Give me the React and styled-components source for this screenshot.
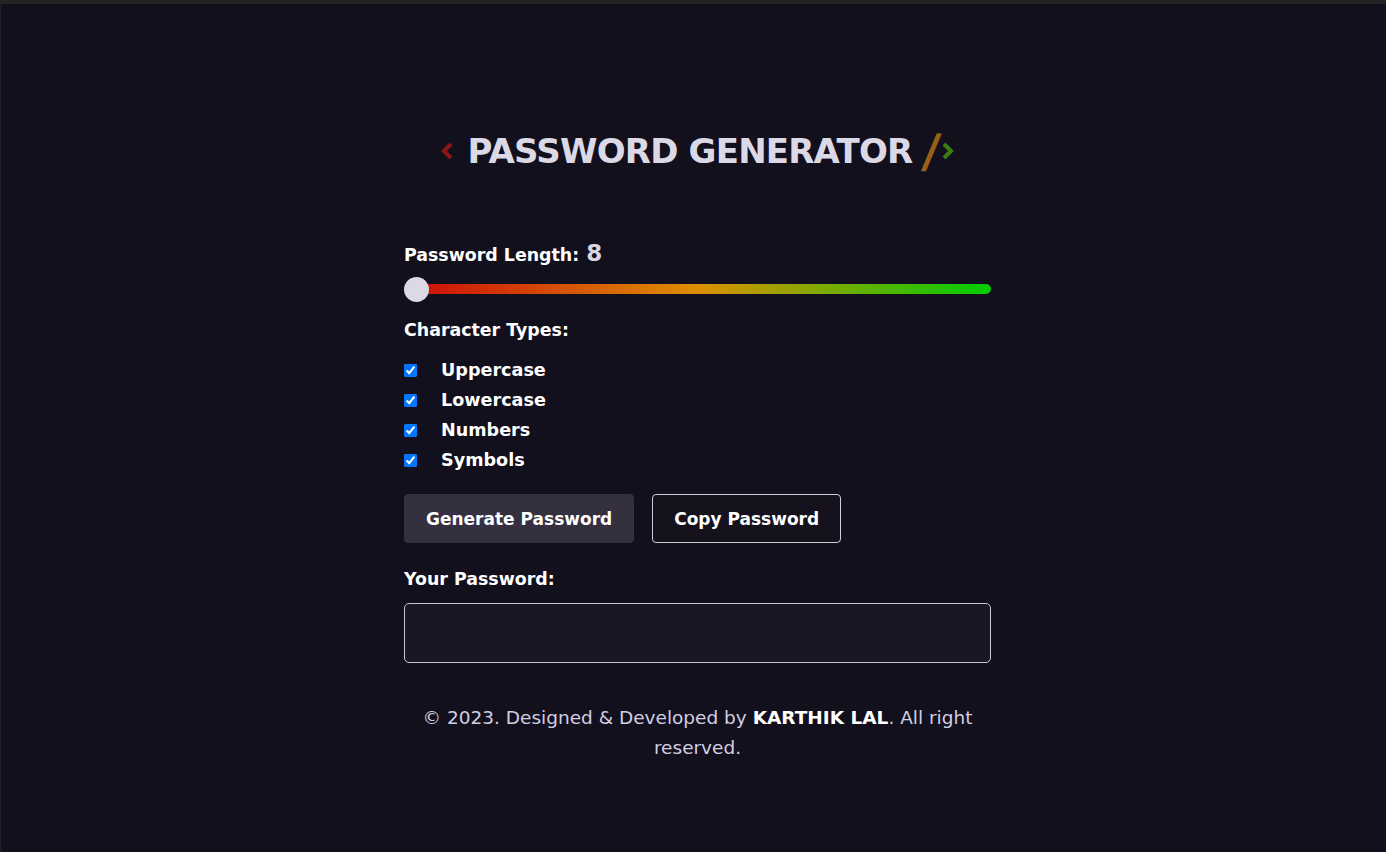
import React, { useState } from 'react';
import styled, { createGlobalStyle } from 'styled-components';

const GlobalStyle = createGlobalStyle`
  html, body {
    margin: 0;
    padding: 0;
    background: #13101d;
  }
  body {
    font-family: "DejaVu Sans", "Noto Sans", sans-serif;
    color: #ffffff;
  }
`;

const TopBar = styled.div`
  height: 4px;
  background: #232323;
`;

const Page = styled.main`
  min-height: 848px;
  border-left: 1px solid #1f1d26;
  box-sizing: border-box;
  display: flex;
  flex-direction: column;
  align-items: center;
  padding: 122px 0 0 8px;
`;

const Title = styled.h1`
  margin: 0;
  display: flex;
  align-items: center;
  font-size: 34px;
  font-weight: 700;
  letter-spacing: -0.8px;
  color: #dcd9e6;
  line-height: 50px;
`;

const Chevron = styled.svg`
  width: 14px;
  height: 18px;
  margin: ${(p) => (p.right ? '0 0 0 2px' : '0 14px 0 0')};
  flex-shrink: 0;
`;

const Slash = styled.span`
  margin-left: 11px;
  color: #9a6016;
  font-size: 46px;
  font-weight: 700;
  line-height: 50px;
  display: inline-block;
  transform: skewX(-6deg);
`;

const Card = styled.section`
  width: 587px;
  margin-top: 65px;
  display: flex;
  flex-direction: column;
`;

const Label = styled.div`
  font-size: 17.4px;
  font-weight: 700;
  color: #ffffff;
  line-height: 24px;
  display: flex;
  align-items: baseline;
  gap: 7px;
`;

const LengthValue = styled.span`
  font-size: 23px;
  font-weight: 700;
  color: #d8d4e6;
`;

const Range = styled.input`
  -webkit-appearance: none;
  appearance: none;
  width: 100%;
  height: 10px;
  margin: 17px 0 0;
  border-radius: 5px;
  background: linear-gradient(90deg, #cc0a0a 0%, #dd8f00 50%, #00cc00 100%);
  outline: none;

  &::-webkit-slider-thumb {
    -webkit-appearance: none;
    appearance: none;
    width: 25px;
    height: 25px;
    border-radius: 50%;
    background: #dcd8e6;
    cursor: pointer;
  }
`;

const Section = styled.div`
  margin-top: ${(p) => p.top || 0}px;
`;

const CheckList = styled.div`
  margin-top: 13px;
  display: flex;
  flex-direction: column;
`;

const CheckRow = styled.label`
  display: flex;
  align-items: center;
  height: 30px;
  font-size: 17.6px;
  font-weight: 700;
  color: #ffffff;

  input {
    width: 13px;
    height: 13px;
    margin: 0 24px 0 0;
  }
`;

const Buttons = styled.div`
  display: flex;
  gap: 18px;
  margin-top: 19px;
`;

const Button = styled.button`
  height: 49px;
  padding: 0 21px;
  font-family: inherit;
  font-size: 17px;
  font-weight: 700;
  color: #ffffff;
  border-radius: 4px;
  cursor: pointer;
  background: ${(p) => (p.outline ? '#15121e' : '#34303f')};
  border: 1px solid ${(p) => (p.outline ? '#cfcbd8' : '#34303f')};
`;

const Output = styled.input`
  box-sizing: border-box;
  width: 100%;
  height: 60px;
  margin-top: 12px;
  background: #1a1724;
  border: 1px solid #c9c5d2;
  border-radius: 5px;
  color: #ffffff;
  font-family: inherit;
  font-size: 17px;
  padding: 0 14px;
  outline: none;
`;

const Footer = styled.footer`
  width: 587px;
  margin-top: 40px;
  text-align: center;
  font-size: 18.5px;
  line-height: 30px;
  color: #d2cee2;

  strong {
    color: #ffffff;
    font-weight: 700;
  }
`;

const types = ['Uppercase', 'Lowercase', 'Numbers', 'Symbols'];

export default function App() {
  const [length, setLength] = useState(8);
  const [checked, setChecked] = useState({ Uppercase: true, Lowercase: true, Numbers: true, Symbols: true });

  return (
    <>
      <GlobalStyle />
      <TopBar />
      <Page>
        <Title>
          <Chevron viewBox="0 0 14 18">
            <polyline points="11,2 4,9 11,16" fill="none" stroke="#8c1515" strokeWidth="4" />
          </Chevron>
          PASSWORD GENERATOR
          <Slash>/</Slash>
          <Chevron right viewBox="0 0 14 18">
            <polyline points="3,2 10,9 3,16" fill="none" stroke="#3b7d12" strokeWidth="4" />
          </Chevron>
        </Title>
        <Card>
          <Label>
            Password Length: <LengthValue>{length}</LengthValue>
          </Label>
          <Range type="range" min="8" max="32" value={length} onChange={(e) => setLength(e.target.value)} />
          <Section top={24}>
            <Label>Character Types:</Label>
            <CheckList>
              {types.map((t) => (
                <CheckRow key={t}>
                  <input
                    type="checkbox"
                    checked={checked[t]}
                    onChange={() => setChecked({ ...checked, [t]: !checked[t] })}
                  />
                  {t}
                </CheckRow>
              ))}
            </CheckList>
          </Section>
          <Buttons>
            <Button>Generate Password</Button>
            <Button outline>Copy Password</Button>
          </Buttons>
          <Section top={24}>
            <Label>Your Password:</Label>
            <Output type="text" readOnly value="" />
          </Section>
        </Card>
        <Footer>
          © 2023. Designed &amp; Developed by <strong>KARTHIK LAL</strong>. All right reserved.
        </Footer>
      </Page>
    </>
  );
}
